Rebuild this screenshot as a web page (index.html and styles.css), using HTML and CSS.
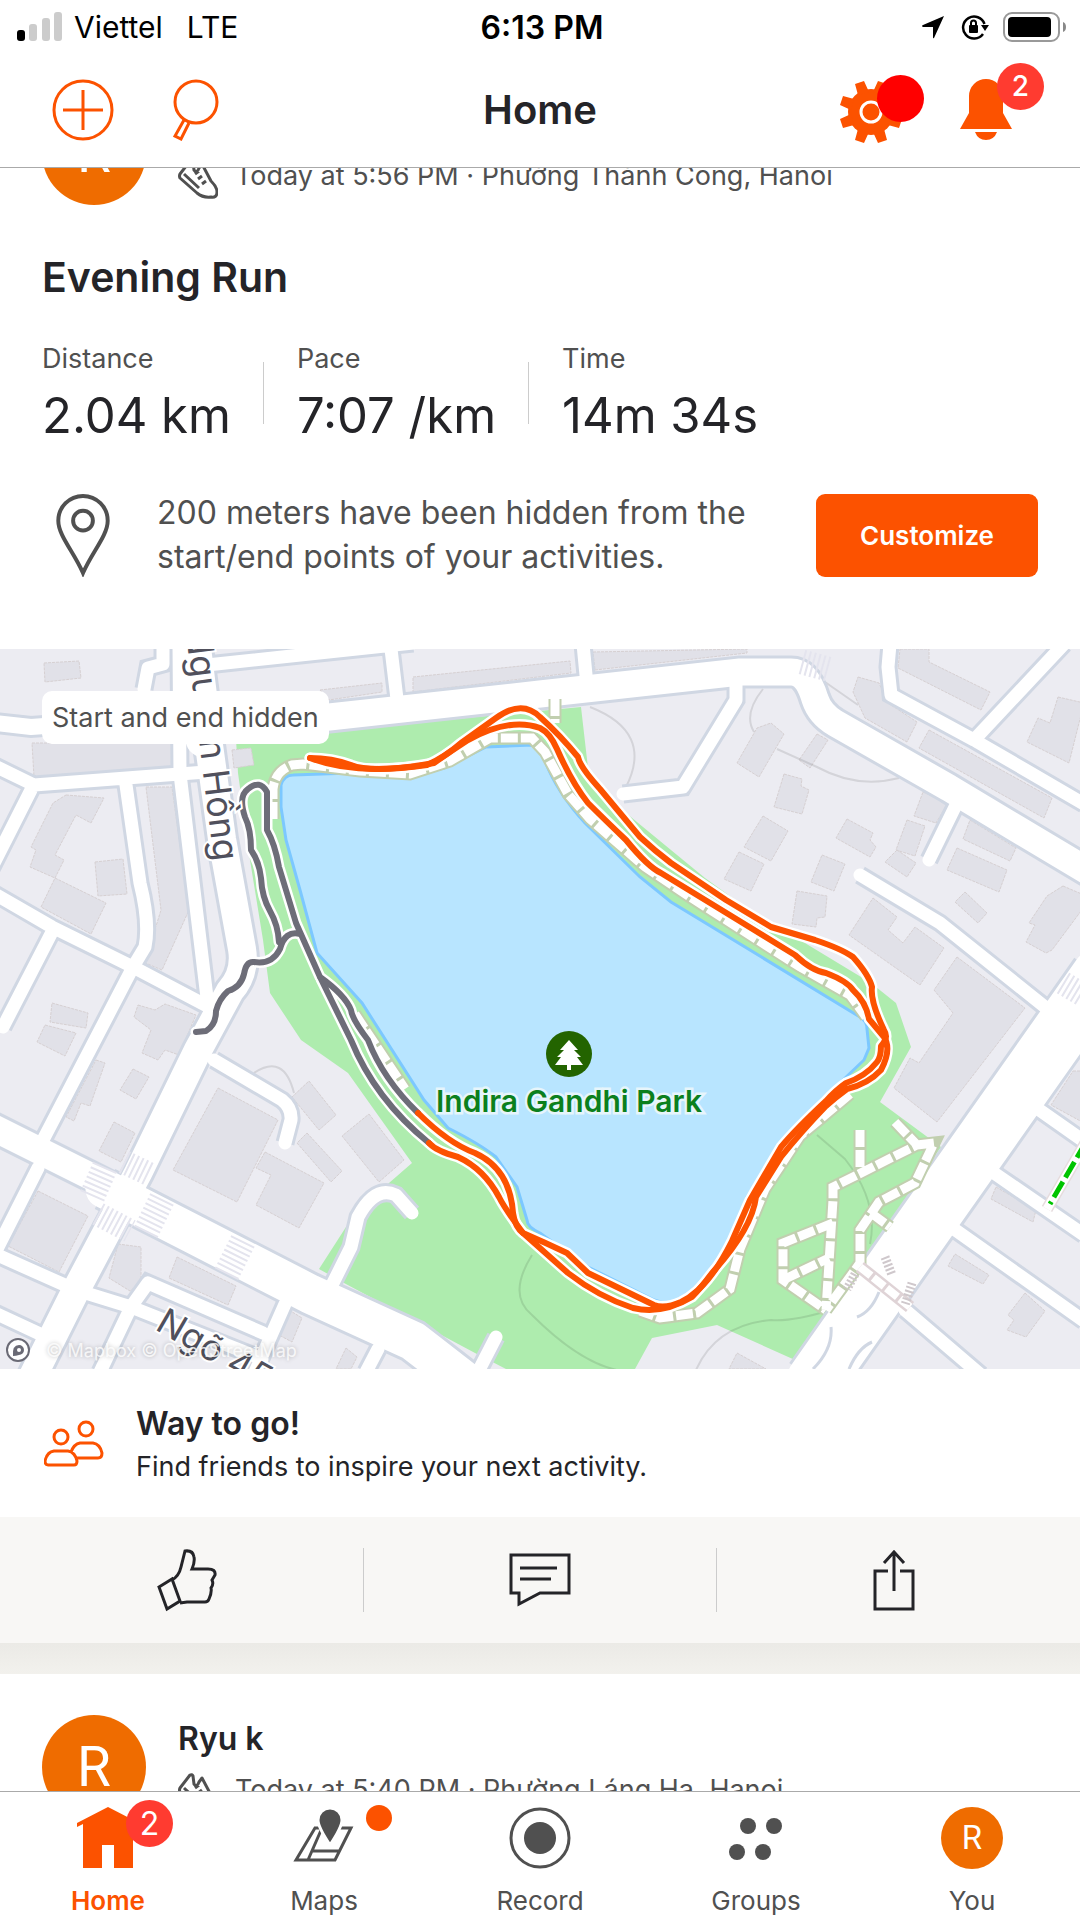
FILE: index.html
```html
<!DOCTYPE html>
<html lang="en">
<head>
    <meta charset="UTF-8">
    <meta name="viewport" content="width=device-width, initial-scale=1.0">
    <title>Home</title>
    <link rel="stylesheet" href="styles.css">
</head>
<body>
    <div class="status-bar">
        <div class="status-left">
            <svg class="signal" viewBox="0 0 45 30">
                <rect x="0" y="18" width="8" height="11" rx="3" fill="#000"/>
                <rect x="12" y="12" width="8" height="17" rx="3" fill="#ccc"/>
                <rect x="25" y="6" width="8" height="23" rx="3" fill="#ccc"/>
                <rect x="37" y="0" width="8" height="29" rx="3" fill="#ccc"/>
            </svg>
            <span>Viettel</span>
            <span class="network">LTE</span>
        </div>
        <div class="clock">6:13 PM</div>
        <div class="status-right">
            <svg class="location" viewBox="0 0 24 24">
                <path d="M23 1 13 23q-1 1-1-1V12H2q-2-1 0-2z"/>
            </svg>
            <svg class="rotation" viewBox="0 0 28 26">
                <path d="M22 20a11 11 0 1 1 1.500-10" fill="none" stroke="#000" stroke-width="2.500"/>
                <path d="M20 11h8l-4 6z"/>
                <rect x="8" y="11" width="9" height="8" rx="1"/>
                <path d="M10 12V9a2.500 2.500 0 0 1 5 0v3" fill="none" stroke="#000" stroke-width="2"/>
            </svg>
            <svg class="battery" viewBox="0 0 64 30">
                <rect x="1" y="1" width="55" height="28" rx="8" fill="none" stroke="#999" stroke-width="2"/>
                <rect x="5" y="5" width="43" height="20" rx="4"/>
                <path d="M60 10q3 1 3 5t-3 5z" fill="#888"/>
            </svg>
        </div>
    </div>

    <header class="top-bar">
        <div class="top-left">
            <button class="icon-button" aria-label="Add">
                <svg width="62" height="62" viewBox="0 0 62 62" fill="none" stroke="#fc5200" stroke-width="3">
                    <circle cx="31" cy="31" r="29"/>
                    <path d="M31 11v40M11 31h40"/>
                </svg>
            </button>
            <button class="icon-button" aria-label="Search">
                <svg width="48" height="62" viewBox="0 0 48 62" fill="none" stroke="#fc5200" stroke-width="3">
                    <circle cx="24" cy="23" r="21"/>
                    <path d="m12 41-9 16 6 3 8-16"/>
                </svg>
            </button>
        </div>
        <h1>Home</h1>
        <div class="top-right">
            <button class="icon-button" aria-label="Settings">
                <svg width="62" height="66" viewBox="-31 -35 62 66">
                    <g fill="#fc5200">
                        <circle r="23"/>
                        <path d="M-16-28-7-31-2-20-13-17zM16-28 7-31 2-20 13-17z"/>
                        <path d="M-16 28-7 31-2 20-13 17zM16 28 7 31 2 20 13 17z"/>
                        <path d="M-28-16-31-7-20-2-17-13zM-28 16-31 7-20 2-17 13z"/>
                        <path d="M28-16 31-7 20-2 17-13zM28 16 31 7 20 2 17 13z"/>
                    </g>
                    <circle r="10" fill="#fc5200" stroke="#fff" stroke-width="3"/>
                </svg>
                <span class="dot"></span>
            </button>
            <button class="icon-button" aria-label="Notifications">
                <svg width="52" height="62" viewBox="0 0 52 62" fill="#fc5200">
                    <path d="M9 17a17 17 0 0 1 34 0v17l9 16H0l9-16zM15 53h22q-3 8-11 8t-11-8z"/>
                </svg>
                <span class="badge">2</span>
            </button>
        </div>
    </header>

    <main class="feed">
        <article class="card scrolled">
            <div class="athlete">
                <div class="avatar">R</div>
                <div class="athlete-info">
                    <div class="name">Ryu k</div>
                    <div class="meta">
                        <svg class="shoe" viewBox="0 0 40 40">
                            <path d="M2 15 12 2q2-1 3 1l1 8q3 4 5-2l3-4 9 17q6 6 6 11 0 6-6 5-8 1-14-4L2 19q-1-2 0-4zM6 15l15 14M21 12l-4 3M24 17l-4 3M28 22l-4 3"/>
                        </svg>
                        <span>Today at 5:56 PM · Phường Thành Công, Hanoi</span>
                    </div>
                </div>
            </div>
            <h2>Evening Run</h2>
            <dl class="stats">
                <div class="stat">
                    <dt>Distance</dt>
                    <dd>2.04 km</dd>
                </div>
                <div class="stat">
                    <dt>Pace</dt>
                    <dd>7:07 /km</dd>
                </div>
                <div class="stat">
                    <dt>Time</dt>
                    <dd>14m 34s</dd>
                </div>
            </dl>
            <div class="privacy">
                <svg class="pin" viewBox="0 0 54 84" fill="none" stroke="#505050" stroke-width="4">
                    <path d="M27 80C18 59 2 42 2 27a25 25 0 0 1 50 0c0 15-16 32-25 53z"/>
                    <circle cx="27" cy="27" r="10"/>
                </svg>
                <p>200 meters have been hidden from the<br>start/end points of your activities.</p>
                <button class="customize">Customize</button>
            </div>
        </article>

        <div class="map">
            <svg class="map-canvas" viewBox="0 0 1080 720" preserveAspectRatio="xMidYMid slice">
                <defs>
                    <g id="streets">
                        <path d="M163-5v20l-15 4-4 21M207 16 413-6M391 0l6 50M583-5l3 31M736 34v17l-53 87-60 7"/>
                        <path d="M-5 117l39 19 172-13M31 141-10 222M126 136l14 98q10 40 5 64l-12 20-90 173M38 519-8 610"/>
                        <path d="M-5 245l57 33 81 40 76 40M52 283 3 378M179-5l1 130 28 232"/>
                        <path d="M214 411l68 40q10 8 9 20l-6 23M332 636l19-38 7-30q17-32 38-22l16 18M496 688l-18 35"/>
                        <path d="M-5 605l81 36 55 17 131 52M133 655l15-21 115 50M285 655l-30 68M131 658l-31 65M-5 664l60 28M378 700l-12 23"/>
                        <path d="M890-5l-2 23 3 28 83 45 110 64M974 91 1064-5M955 158l-26 53M860 226l80 48 105 84"/>
                        <path d="M1038 460l47 33M994 524l90 62M954 580l130 92M905 661l76 65"/>
                    </g>
                    <path id="boulevard" d="M320 69 540 45l200-22h51q16 0 24 27 5 15 20 24l114 65 140 84"/>
                    <path id="lake-road" d="M204 60 222 190l20 110q4 24-12 42l-32 59-60 123-62 117-45 90"/>
                    <g id="paths">
                        <path d="M273 170 273 140Q275 122 292 116L303 115 360 122 410 125 450 112 490 89 532 89 545 103 568 145 590 170 645 218 690 248 800 318 850 346 866 368"/>
                        <path d="M850 445 800 487 765 540 740 600 730 640 697 664 660 669 640 662M355 365 405 440M555 50v24"/>
                        <path d="M860 481v40M895 473l22 23-84 42v13l-7 110M917 496l17-2-19 40-36 19-19 28v33l-34 47M833 574l-50 20v37l43 30M783 631l46-22M871 564l19 14"/>
                    </g>
                    <path id="run-hidden" d="M196 383 206 382Q216 376 216 362 219 350 228 342 241 338 244 325 246 312 254 313 272 316 280 300 285 281 300 285M279 293Q278 276 270 262 262 248 261 229 259 212 251 201 251 180 245 168 238 147 248 140 260 130 267 143L267 181Q275 195 279 218L296 274 320 328 351 391Q375 450 429 494M320 328Q345 346 351 361 352 370 368 391 383 430 418 464"/>
                    <g id="run">
                        <path d="M310 109Q332 109 351 116 370 124 427 116 445 108 461 94L496 69Q522 50 540 68 560 86 578 108 580 118 600 140 620 164 640 188 655 202 671 214L726 251 771 278 815 291Q842 300 853 308 869 326 872 338 870 352 884 381 889 389 881 397 881 408 877 413 866 427 846 434 836 441 826 452 796 480 781 498L750 551 732 592Q708 640 681 653 665 660 654 656L588 624 567 604Q546 594 523 584 515 578 513 564 510 520 475 504 448 494 418 464"/>
                        <path d="M310 109Q360 128 434 114 451 102 468 91 510 68 540 79 550 84 557 100 572 134 588 154 604 170 626 191 648 218 661 224L733 268 795 306Q812 322 826 324 847 332 853 341 866 353 869 370L884 388Q892 400 881 421 868 435 847 440 836 448 826 457 800 484 781 508L756 548Q752 580 712 624 700 640 692 648 662 666 633 659 599 648 568 624L523 584Q505 560 499 548 484 520 458 508 436 502 429 494"/>
                    </g>
                </defs>
                <rect width="1080" height="720" fill="#ececf2"/>

                <g class="buildings">
                    <path d="M44 14 79 12 81 29 45 33zM32 94H172V118L34 128zM66 146 104 149 91 174 76 166 55 206 64 211 55 229 30 218 36 201 31 198 53 154z"/>
                    <path d="M95 213 123 210 127 245 98 247zM55 229 106 254 91 285 41 258zM146 138H172L189 261 162 321 143 313 157 274 161 261z"/>
                    <path d="M413 28 570 12 571 24 413 43zM320 41 382 34V43L329 51zM52 354 88 364 86 379 50 373zM45 376 76 384 65 407 37 393z"/>
                    <path d="M138 356 155 361 165 355 196 366 179 406 165 401 158 411 142 404 151 381 134 368zM96 411 105 414 90 457 81 454 74 472 66 468z"/>
                    <path d="M133 420 149 428 136 450 120 441zM114 473 135 484 121 513 99 502zM218 439 278 471 237 553 173 521z"/>
                    <path d="M265 503 324 534 299 579 256 556 271 526 256 519zM309 432 336 466 319 481 292 448zM307 484 342 522 331 533 297 494z"/>
                    <path d="M38 542 88 567 59 623 8 597zM118 595 141 598V634L130 642 109 629zM177 608 236 637 228 656 169 629z"/>
                    <path d="M289 661 302 669 292 693 279 686zM346 699 357 708 351 720H336zM593 3 747 0V4L595 21z"/>
                    <path d="M858 28 879 34 888 54 917 73 907 93 865 69 853 43zM929 81 1052 149 1044 169 919 99zM900 0H929V13L990 43 981 61 898 19z"/>
                    <path d="M1058 48 1084 54 1069 114 1027 93 1038 69 1050 74zM771 74 784 85 759 128 737 114 757 79zM817 85 828 91 810 119 799 111z"/>
                    <path d="M784 125 802 130 801 137 809 141 802 165 774 158zM763 167 788 182 771 212 744 198zM739 203 764 215 751 242 724 230z"/>
                    <path d="M847 170 873 184 870 191 876 198 870 208 836 189zM822 206 845 215 834 242 811 233zM797 242 827 247 825 268 817 269 816 278 792 275z"/>
                    <path d="M923 143 948 154 936 174 914 167zM907 171 925 177 915 207 896 201zM897 201 916 214 907 228 885 213z"/>
                    <path d="M970 171 1016 199 1010 212 963 190zM957 199 1007 221 999 243 947 221zM965 243 987 264 978 274 955 253z"/>
                    <path d="M1063 237 1084 246V258L1052 301 1046 304 1026 293 1035 276 1029 274 1047 247zM873 249 897 268 888 281 903 294 915 278 944 299 920 336 849 286z"/>
                    <path d="M957 308 1025 359 937 473 894 439 910 409 919 414 953 364 934 341zM1073 422H1084V474L1051 456z"/>
                    <path d="M996 538 1036 561 1033 573 991 550zM955 605 989 626 983 635 948 617zM1025 644 1045 662 1026 688 1007 681 1014 671 1008 666zM737 704 766 720H729z"/>
                </g>

                <path fill="#aeecae" d="M236 90 329 82 581 58 588 119 626 164 705 229 767 274 795 288 871 334 896 354 911 398 880 453 941 498 795 711 717 676 652 689 635 720H506L475 704 344 634 319 620 346 578 389 534 412 514 348 424 301 391 270 344 263 291 250 211 238 124z"/>
                <path class="buildings" d="M232 101 251 99 254 116 234 119zM369 465 404 511 379 533 342 487z"/>
                <g fill="none" stroke="#000" stroke-opacity=".1" stroke-width="2">
                    <path d="M590 58q64 25 36 80M763 40q-20 25-9 43M777 100l40 18q40 22 82 11M825 33l33 23M817 486l28 24q34 43 25 85M831 661q-40 12-60 10-55 5-75 50M532 606q-25 40 0 60 50 50 90 56M254 424q30-20 40 20"/>
                </g>

                <g class="casing">
                    <use href="#streets" stroke-width="19"/>
                    <path d="M-5 74 31 78 140 70 325 69" stroke-width="22"/>
                    <path d="M192-5l12 95" stroke-width="43"/>
                    <use href="#lake-road" stroke-width="34"/>
                    <path d="M-10 477 110 537" stroke-width="33"/>
                    <path d="M105 540 193 585 310 645 413 692 475 740" stroke-width="45"/>
                    <use href="#boulevard" stroke-width="33"/>
                    <path d="M1100 327 881 638 815 732" stroke-width="63"/>
                </g>
                <g class="road">
                    <use href="#streets" stroke-width="13"/>
                    <path d="M-5 74 31 78 140 70 325 69" stroke-width="16"/>
                    <path d="M192-5l12 95" stroke-width="37"/>
                    <use href="#lake-road" stroke-width="28"/>
                    <path d="M-10 477 110 537" stroke-width="27"/>
                    <path d="M105 540 193 585 310 645 413 692 475 740" stroke-width="39"/>
                    <use href="#boulevard" stroke-width="27"/>
                    <path d="M1100 327 881 638 815 732" stroke-width="57"/>
                </g>
                <g class="casing" stroke-width="3">
                    <path d="M831 678q2 22-18 42M872 693q-14 6-23 27M879 643q-8 20-22 25"/>
                </g>
                <g fill="none" stroke="#e4e4ee" stroke-dasharray="2 3">
                    <path d="M802 13l26 7" stroke-width="25"/>
                    <path d="M105 518 91 550M162 550 145 585M243 592 226 626" stroke-width="26"/>
                    <path d="M124 513l27 13M98 565l32 17" stroke-width="24"/>
                    <path d="M1063 334l20 12" stroke-width="24"/>
                </g>

                <path fill="#b8e5ff" stroke="#7cc8ff" stroke-width="3" d="M281 136Q284 126 293 126L351 124Q400 132 444 119L486 98 532 96 543 106Q554 140 585 174L640 228 671 253 860 368Q867 372 867 380L869 399 864 411 843 431 788 491 747 548 736 581 705 634Q680 662 654 651L588 618 540 584Q527 578 527 571L517 538 496 508Q480 495 448 479L424 451 362 354 317 304 300 241 286 191 281 158z"/>

                <use href="#paths" class="footpath-edge"/>
                <use href="#paths" class="footpath"/>
                <g fill="none">
                    <path d="M860 618 910 658" stroke="#dfd3d6" stroke-width="13"/>
                    <path d="M860 618 910 658" stroke="#fff" stroke-width="8" stroke-dasharray="14 3"/>
                    <path d="M885 608 892 626M912 634l-7 22M855 625l-8 15" stroke="#cfc8cc" stroke-width="9" stroke-dasharray="2 2"/>
                    <path d="M1086 493 1047 560" stroke="#e6dcde" stroke-width="12"/>
                    <path d="M1086 493 1047 560" stroke="#fff" stroke-width="9"/>
                    <path d="M1086 493 1050 555" stroke="#00c400" stroke-width="5" stroke-dasharray="18 5"/>
                </g>

                <use href="#run-hidden" class="route-halo"/>
                <use href="#run" class="route-halo"/>
                <use href="#run-hidden" class="route-hidden"/>
                <use href="#run" class="route"/>

                <circle cx="569" cy="405" r="23" fill="#236400"/>
                <path fill="#fff" d="M569 391l9 10h-4l7 7h-4l6 8h-12v5h-4v-5h-12l6-8h-4l7-7h-4z"/>
                <text class="park-name" x="569" y="463">Indira Gandhi Park</text>
                <text class="street-name" text-anchor="end" transform="translate(214 213) rotate(83)">Nguyễn Hồng</text>
                <text class="street-name" transform="translate(154 680) rotate(30)">Ngõ 45</text>

                <circle cx="18" cy="701" r="11" fill="#fff" stroke="#6a6a75" stroke-width="2"/>
                <path d="M13 707q-1-11 6-11a5 5 0 0 1 0 10q-3 1-6 1z" fill="#6a6a75"/>
                <circle cx="19" cy="701" r="2" fill="#fff"/>
                <text class="attribution" x="46" y="708">© Mapbox © OpenStreetMap</text>
            </svg>
            <span class="map-label">Start and end hidden</span>
        </div>

        <div class="prompt">
            <svg class="friends" viewBox="0 0 60 48" fill="none" stroke="#fc5200" stroke-width="3">
                <circle cx="17" cy="17" r="7"/>
                <circle cx="42" cy="9" r="7"/>
                <path d="M10 31h14q7 1 9 10 0 4-3 4H4q-3 0-3-4 2-9 9-10zM27 32q3-8 9-9h13q7 1 9 10 0 5-4 5H33"/>
            </svg>
            <div>
                <h3>Way to go!</h3>
                <p>Find friends to inspire your next activity.</p>
            </div>
        </div>

        <div class="actions">
            <button aria-label="Give kudos">
                <svg width="62" height="64" viewBox="-2 0 62 64" fill="none" stroke="#242428" stroke-width="3">
                    <path d="M2 39 15 31 23 53 10 61zM15 32q7-4 9-13L28 3q8-1 9 6 1 5-2 12h16q8 0 7 6l-3 5q2 4-1 8 1 4-2 11-1 3-4 3H30l-7 1"/>
                </svg>
            </button>
            <button aria-label="Comment">
                <svg width="62" height="64" viewBox="0 0 62 64" fill="none" stroke="#242428" stroke-width="3">
                    <path d="M2 7h58v38H31L10 56V45H2zM11 20h37M11 31h31"/>
                </svg>
            </button>
            <button aria-label="Share">
                <svg width="62" height="64" viewBox="0 0 62 64" fill="none" stroke="#242428" stroke-width="3">
                    <path d="M25 23H12v38h38V23H37M31 43V4M21 15 31 4l10 11"/>
                </svg>
            </button>
        </div>
        <div class="gap"></div>

        <article class="card next">
            <div class="athlete">
                <div class="avatar">R</div>
                <div class="athlete-info">
                    <div class="name">Ryu k</div>
                    <div class="meta">
                        <svg class="shoe" viewBox="0 0 40 40">
                            <path d="M2 15 12 2q2-1 3 1l1 8q3 4 5-2l3-4 9 17q6 6 6 11 0 6-6 5-8 1-14-4L2 19q-1-2 0-4zM6 15l15 14M21 12l-4 3M24 17l-4 3M28 22l-4 3"/>
                        </svg>
                        <span>Today at 5:40 PM · Phường Láng Hạ, Hanoi</span>
                    </div>
                </div>
            </div>
        </article>
    </main>

    <nav class="tab-bar">
        <a href="#" class="tab active">
            <span class="tab-icon">
                <svg width="62" height="62" viewBox="0 0 62 62" fill="#fc5200">
                    <path d="M31 0 62 16v4l-6-3v44H37V38H25v23H6V17l-6 3v-4z"/>
                </svg>
                <span class="badge">2</span>
            </span>
            Home
        </a>
        <a href="#" class="tab">
            <span class="tab-icon">
                <svg width="62" height="62" viewBox="0 0 62 62">
                    <path d="M22 21h36L42 53H3zM29 21 15 53M20 44h26" fill="none" stroke="#505050" stroke-width="3"/>
                    <path d="M37 38Q25 20 25 13a12 12 0 0 1 24 0q0 7-12 25z" fill="#505050" stroke="#fff" stroke-width="3"/>
                </svg>
                <span class="dot"></span>
            </span>
            Maps
        </a>
        <a href="#" class="tab">
            <span class="tab-icon">
                <svg width="62" height="62" viewBox="0 0 62 62">
                    <circle cx="31" cy="31" r="29" fill="none" stroke="#505050" stroke-width="3"/>
                    <circle cx="31" cy="31" r="16" fill="#505050"/>
                </svg>
            </span>
            Record
        </a>
        <a href="#" class="tab">
            <span class="tab-icon">
                <svg width="62" height="62" viewBox="0 0 62 62" fill="#505050">
                    <circle cx="23" cy="19" r="8"/>
                    <circle cx="49" cy="19" r="8"/>
                    <circle cx="12" cy="45" r="8"/>
                    <circle cx="38" cy="45" r="8"/>
                </svg>
            </span>
            Groups
        </a>
        <a href="#" class="tab">
            <span class="tab-icon avatar small">R</span>
            You
        </a>
    </nav>
</body>
</html>
```
FILE: styles.css
```css
* {
    box-sizing: border-box;
}
body {
    font-family: 'Inter', Arial, sans-serif;
    margin: 0;
    height: 100vh;
    display: flex;
    flex-direction: column;
    overflow: hidden;
    background-color: #fff;
    color: #242428;
}
h1, h2, h3, p, dl, dd {
    margin: 0;
}
button {
    font-family: inherit;
    border: none;
    padding: 0;
    background: none;
    cursor: pointer;
}
svg {
    display: block;
    flex-shrink: 0;
}

/* status bar */
.status-bar {
    display: grid;
    grid-template-columns: 1fr auto 1fr;
    align-items: center;
    height: 54px;
    padding: 0 13px 0 17px;
    font-size: 30px;
    color: #000;
}
.status-left, .status-right {
    display: flex;
    align-items: center;
    gap: 12px;
}
.status-right {
    justify-content: flex-end;
    gap: 14px;
}
.network {
    margin-left: 12px;
}
.clock {
    font-size: 32px;
    font-weight: 600;
}
.signal {
    width: 45px;
    height: 30px;
}
.location {
    width: 24px;
    height: 24px;
    margin-right: 2px;
}
.rotation {
    width: 28px;
    height: 26px;
}
.battery {
    width: 64px;
    height: 30px;
}

/* top bar */
.top-bar {
    display: grid;
    grid-template-columns: 1fr auto 1fr;
    align-items: center;
    height: 114px;
    padding: 0 68px 2px 52px;
    border-bottom: 1px solid #aaa;
    background-color: #fff;
    position: relative;
    z-index: 1;
}
.top-left, .top-right {
    display: flex;
    align-items: center;
    gap: 58px;
}
.top-right {
    justify-content: flex-end;
}
.top-bar h1 {
    font-size: 40px;
    font-weight: 600;
    margin-left: 16px;
}
.icon-button, .tab-icon {
    position: relative;
}
.badge {
    position: absolute;
    top: -16px;
    left: 37px;
    width: 47px;
    height: 47px;
    border-radius: 50%;
    background-color: #ff3b30;
    color: #fff;
    font-size: 28px;
    font-weight: 500;
    line-height: 47px;
    text-align: center;
}
.top-right .dot {
    position: absolute;
    top: -2px;
    left: 37px;
    width: 47px;
    height: 47px;
    border-radius: 50%;
    background-color: #f00;
}

/* feed */
.feed {
    flex: 1;
    min-height: 0;
    overflow: hidden;
}
.card {
    padding: 0 42px;
}
.scrolled {
    margin-top: -67px;
}
.athlete {
    display: flex;
    gap: 32px;
}
.avatar {
    display: flex;
    align-items: center;
    justify-content: center;
    width: 104px;
    height: 104px;
    border-radius: 50%;
    background-color: #ef6c00;
    color: #fff;
    font-family: 'Roboto', Arial, sans-serif;
    font-size: 55px;
    flex-shrink: 0;
}
.athlete-info {
    padding-top: 4px;
}
.name {
    font-size: 32px;
    font-weight: 600;
    line-height: 40px;
}
.meta {
    display: flex;
    gap: 17px;
    margin-top: 14px;
    font-size: 27px;
    line-height: 34px;
    color: #505050;
}
.shoe {
    width: 40px;
    height: 40px;
    fill: none;
    stroke: #505050;
    stroke-width: 3;
    stroke-linejoin: round;
}
.card h2 {
    margin-top: 48px;
    font-size: 41px;
    font-weight: 600;
    line-height: 48px;
}
.stats {
    display: flex;
    margin-top: 41px;
}
.stat {
    position: relative;
    padding-right: 33px;
    margin-right: 33px;
}
.stat::after {
    content: "";
    position: absolute;
    right: 0;
    top: 20px;
    width: 1px;
    height: 62px;
    background-color: #ccc;
}
.stat:last-child::after {
    display: none;
}
.stat dt {
    font-size: 27px;
    line-height: 34px;
    color: #505050;
}
.stat dd {
    margin-top: 10px;
    font-size: 49px;
    line-height: 60px;
}
.privacy {
    display: flex;
    align-items: center;
    margin-top: 45px;
    margin-bottom: 70px;
    padding-left: 14px;
}
.pin {
    width: 54px;
    height: 83px;
}
.privacy p {
    flex: 1;
    margin-left: 47px;
    font-size: 32px;
    line-height: 44px;
    color: #505050;
    white-space: nowrap;
}
.customize {
    height: 83px;
    padding: 0 44px;
    border-radius: 9px;
    background-color: #fc5200;
    color: #fff;
    font-size: 26px;
    font-weight: 600;
}

/* map */
.map {
    position: relative;
}
.map-canvas {
    width: 100%;
    aspect-ratio: 3 / 2;
}
.map-label {
    position: absolute;
    top: 42px;
    left: 42px;
    padding: 0 10px;
    border-radius: 10px;
    background-color: #fff;
    color: #505050;
    font-size: 27px;
    line-height: 53px;
}
.buildings {
    fill: #e1e1e8;
    stroke: #d6d0d2;
    stroke-width: 1;
    stroke-dasharray: 3 1;
}
.casing {
    fill: none;
    stroke: #d0d7e3;
}
.road {
    fill: none;
    stroke: #fff;
    stroke-linecap: round;
    stroke-linejoin: round;
}
.footpath-edge {
    fill: none;
    stroke: #c1cfaf;
    stroke-width: 13;
}
.footpath {
    fill: none;
    stroke: #fff;
    stroke-width: 9;
    stroke-dasharray: 17 3;
}
.route-halo, .route-hidden, .route {
    fill: none;
    stroke: #fff;
    stroke-width: 11;
    stroke-linecap: round;
    stroke-linejoin: round;
}
.route-hidden {
    stroke: #6d6d78;
    stroke-width: 6;
}
.route {
    stroke: #fc5200;
    stroke-width: 6;
}
.park-name {
    fill: #0b801d;
    stroke: #e6f5fb;
    stroke-width: 5;
    paint-order: stroke;
    font-size: 30px;
    font-weight: 600;
    text-anchor: middle;
}
.street-name {
    fill: #50505c;
    stroke: #fff;
    stroke-width: 4;
    paint-order: stroke;
    font-size: 36px;
}
.attribution {
    fill: #fff;
    fill-opacity: 0.8;
    font-size: 18px;
    text-shadow: 0 0 4px rgba(0, 0, 0, 0.3);
}

/* below the map */
.prompt {
    display: flex;
    align-items: center;
    gap: 32px;
    padding: 35px 44px 33px;
}
.friends {
    width: 60px;
    height: 48px;
}
.prompt h3 {
    font-size: 32px;
    font-weight: 600;
    line-height: 40px;
}
.prompt p {
    margin-top: 6px;
    font-size: 27px;
    line-height: 34px;
}
.actions {
    display: flex;
    padding: 31px 10px;
    background-color: #f8f7f5;
}
.actions button {
    flex: 1;
    display: flex;
    justify-content: center;
}
.actions button + button {
    border-left: 1px solid #ccc;
}
.gap {
    height: 31px;
    background: linear-gradient(#ebeae6, #f2f1ed);
}
.next {
    padding-top: 41px;
}

/* bottom tabs */
.tab-bar {
    display: flex;
    padding: 15px 0 2px;
    border-top: 1px solid #aaa;
    background-color: #fff;
    position: relative;
}
.tab {
    flex: 1;
    display: flex;
    flex-direction: column;
    align-items: center;
    gap: 15px;
    font-size: 26px;
    line-height: 34px;
    color: #505050;
    text-decoration: none;
}
.tab.active {
    color: #fc5200;
    font-weight: 600;
}
.tab .badge {
    top: -7px;
    left: 49px;
    font-size: 32px;
    font-weight: 400;
}
.tab .dot {
    position: absolute;
    top: -2px;
    left: 73px;
    width: 26px;
    height: 26px;
    border-radius: 50%;
    background-color: #fc5200;
}
.avatar.small {
    width: 62px;
    height: 62px;
    font-size: 33px;
}
```
